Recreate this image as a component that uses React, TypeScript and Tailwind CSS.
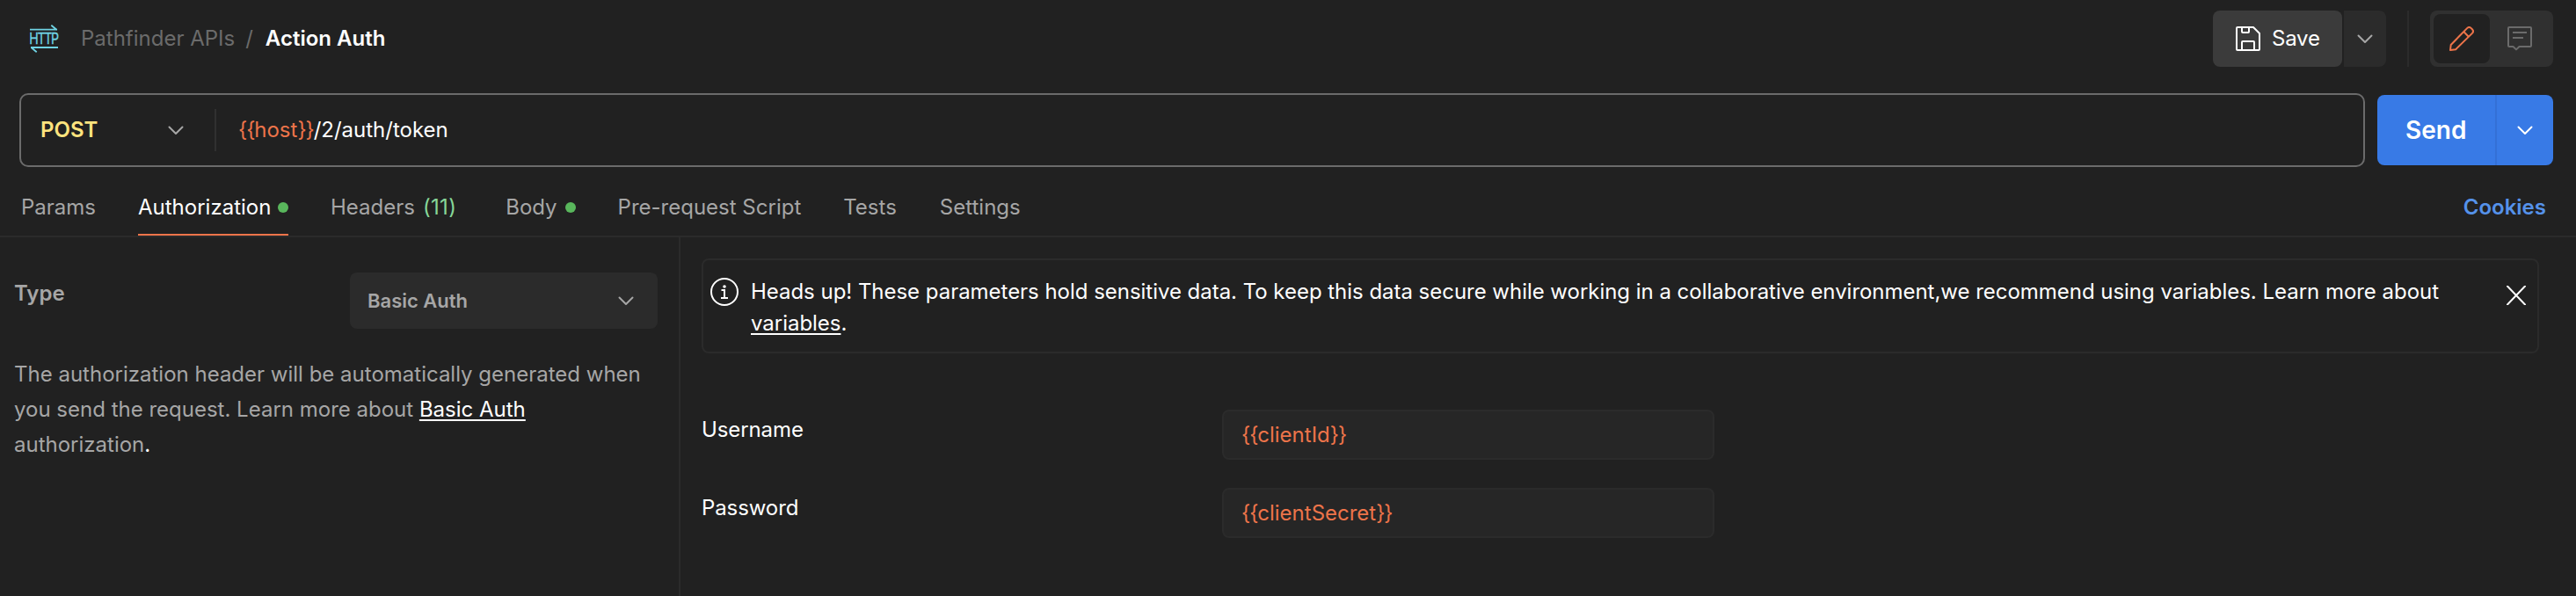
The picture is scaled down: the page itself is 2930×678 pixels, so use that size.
import React from "react";

function Chevron({ className = "" }: { className?: string }) {
  return (
    <svg viewBox="0 0 18 11" className={"h-[11px] w-[18px] shrink-0 " + className} fill="none" stroke="currentColor" strokeWidth="2" strokeLinecap="round" strokeLinejoin="round">
      <path d="M1.5 1.5L9 9l7.500-7.500" />
    </svg>
  );
}

function HttpIcon() {
  return (
    <svg viewBox="0 0 32 32" className="h-8 w-8 overflow-visible text-[#6fd3e3]" fill="none" stroke="currentColor" strokeWidth="1.8">
      <path d="M0 5.6h31M24.3 .8l6.4 5.2M32 26H1M7.7 31.2L1.5 26" />
      <text x="-.8" y="22.4" fontSize="17.5" letterSpacing="-1.6" textLength="32.6" lengthAdjust="spacingAndGlyphs" fill="currentColor" strokeWidth=".3" className="font-['Inter',sans-serif]">
        HTTP
      </text>
    </svg>
  );
}

function SaveIcon() {
  return (
    <svg viewBox="0 0 28 28" className="h-7 w-7" fill="none" stroke="currentColor" strokeWidth="2" strokeLinejoin="round">
      <path d="M1 2a1 1 0 0 1 1-1h18L27 8V26a1 1 0 0 1-1 1H2a1 1 0 0 1-1-1z" />
      <path d="M7 1v5a1 1 0 0 0 1 1h6a1 1 0 0 0 1-1V1M7 27V18a1 1 0 0 1 1-1h12a1 1 0 0 1 1 1v9" />
    </svg>
  );
}

function PencilIcon() {
  return (
    <svg viewBox="0 0 28 28" className="h-7 w-7 text-[#ed744a]" fill="none" stroke="currentColor" strokeWidth="2" strokeLinejoin="round">
      <path d="M1 27l.7-6L20.1 2.100a3.400 3.400 0 0 1 4.700 0l1.100 1.100a3.400 3.400 0 0 1 0 4.700L7.200 26.200z" />
      <path d="M16.300 6l5.500 5.800" />
    </svg>
  );
}

function CommentIcon() {
  return (
    <svg viewBox="0 0 28 28" className="h-7 w-7 text-[#6b6b6b]" fill="none" stroke="currentColor" strokeWidth="2" strokeLinejoin="round">
      <path d="M2 1h24a1 1 0 0 1 1 1v20a1 1 0 0 1-1 1H13.500L10 26.400 6.500 23H2a1 1 0 0 1-1-1V2a1 1 0 0 1 1-1z" />
      <path d="M6 7h16M6 13h12" />
    </svg>
  );
}

function InfoIcon() {
  return (
    <svg viewBox="0 0 32 32" className="h-8 w-8 shrink-0" fill="none" stroke="currentColor" strokeWidth="2">
      <circle cx="16" cy="16" r="15" />
      <path d="M12.5 14H16v9M12 23h8" />
      <circle cx="16" cy="10" r="1.8" fill="currentColor" stroke="none" />
    </svg>
  );
}

function CloseIcon() {
  return (
    <svg viewBox="0 0 22 22" className="h-[22px] w-[22px]" fill="none" stroke="currentColor" strokeWidth="2" strokeLinecap="round">
      <path d="M1 .5l20 21M21 .5l-20 21" />
    </svg>
  );
}

function Dot() {
  return <span className="h-3 w-3 rounded-full bg-[#59b75c]" />;
}

function Variable({ name }: { name: string }) {
  return (
    <span className="text-[#ed744a]">
      <span className="tracking-[-1.1px]">{"{{"}</span>
      {name}
      <span className="tracking-[-1.1px]">{"}}"}</span>
    </span>
  );
}

function Credential({ label, variable }: { label: string; variable: string }) {
  return (
    <div className="flex h-[57px] items-start">
      <label className="w-[592px] leading-[46px] tracking-[-0.1px]">{label}</label>
      <div className="flex h-[57px] w-[560px] items-center rounded-lg border-2 border-[#2b2b2b] bg-[#262626] px-5">
        <Variable name={variable} />
      </div>
    </div>
  );
}

export default function App() {
  return (
    <div className="flex h-[678px] w-[2930px] flex-col overflow-hidden bg-[#212121] font-['Inter',sans-serif] text-[24px] leading-[36px] whitespace-nowrap text-white">
      <header className="mt-3 flex h-16 items-center pr-[26px] pl-[34px]">
        <HttpIcon />
        <span className="ml-[26px] text-[#6b6b6b]">Pathfinder APIs</span>
        <span className="ml-[12px] text-[#6b6b6b]">/</span>
        <span className="ml-[14px] font-semibold">Action Auth</span>
        <div className="ml-auto flex h-16 items-center">
          <button className="flex h-16 w-[147px] items-center rounded-lg bg-[#3b3b3b] pl-[26px]">
            <SaveIcon />
            <span className="ml-[13px] tracking-[-0.2px]">Save</span>
          </button>
          <button className="ml-[2px] flex h-16 w-12 items-center justify-center rounded-r-lg bg-[#2b2b2b] text-[#a6a6a6]">
            <Chevron />
          </button>
          <div className="ml-6 h-16 w-[2px] bg-[#2b2b2b]" />
          <div className="ml-6 flex h-16 w-[140px] items-center rounded-lg bg-[#303030] p-1">
            <div className="flex h-14 w-16 items-center justify-center rounded-lg bg-[#212121]">
              <PencilIcon />
            </div>
            <div className="flex h-14 flex-1 items-center justify-center">
              <CommentIcon />
            </div>
          </div>
        </div>
      </header>

      <div className="mt-[30px] flex items-center pr-[26px] pl-[22px]">
        <div className="flex h-[84px] flex-1 items-center rounded-[10px] border-2 border-[#6b6b6b] pl-[22px]">
          <span className="w-[145px] font-semibold text-[#ffe47e]">POST</span>
          <Chevron className="text-[#a6a6a6]" />
          <div className="ml-[35px] h-12 w-[2px] bg-[#303030]" />
          <span className="ml-[25px]">
            <Variable name="host" />
            /2/auth/token
          </span>
        </div>
        <div className="ml-[14px] flex h-20 w-[200px] items-center rounded-lg bg-[#387ae6]">
          <span className="w-[134px] pl-[32px] text-[28px] font-semibold">Send</span>
          <div className="h-20 w-[2px] bg-[#3470d6]" />
          <div className="flex h-20 flex-1 items-center justify-center">
            <Chevron />
          </div>
        </div>
      </div>

      <nav className="mt-[14px] flex h-[66px] shrink-0 items-stretch border-b-2 border-[#2b2b2b] pr-[34px] pl-6 text-[#a6a6a6]">
        <div className="flex items-center">Params</div>
        <div className="ml-12 flex w-[171px] items-center justify-between border-b-2 border-[#ed744a] pt-[2px] text-white">
          Authorization
          <Dot />
        </div>
        <div className="ml-12 flex items-center gap-[9px]">
          <span>Headers</span>
          <span className="tracking-[0.3px] text-[#87d799]">(11)</span>
        </div>
        <div className="ml-[56px] flex items-center gap-[9px]">
          Body
          <Dot />
        </div>
        <div className="ml-12 flex items-center">Pre-request Script</div>
        <div className="ml-12 flex items-center">Tests</div>
        <div className="ml-[49px] flex items-center">Settings</div>
        <div className="ml-auto flex items-center font-semibold text-[#5592ea]">Cookies</div>
      </nav>

      <main className="flex flex-1">
        <aside className="w-[774px] border-r-2 border-[#2b2b2b] pt-10 pl-4 text-[#a6a6a6]">
          <div className="flex h-16 items-start">
            <span className="w-[382px] leading-[48px] font-semibold">Type</span>
            <div className="flex h-16 w-[350px] items-center justify-between rounded-lg bg-[#2b2b2b] pr-[27px] pl-5 text-[22px] font-semibold">
              Basic Auth
              <Chevron />
            </div>
          </div>
          <p className="mt-8 w-[730px] leading-10 whitespace-normal">
            The authorization header will be automatically generated when you send the request. Learn more about{" "}
            <a className="text-white underline decoration-2 underline-offset-[3px]">Basic Auth</a> authorization<span className="text-white">.</span>
          </p>
        </aside>

        <section className="flex-1 pt-6 pl-6">
          <div className="flex h-[108px] w-[2090px] items-start rounded-lg border-2 border-[#2b2b2b] pt-[18px] pl-2">
            <div className="pt-[2px]">
              <InfoIcon />
            </div>
            <p className="ml-[14px] w-[1960px] tracking-[-0.03px] whitespace-normal">
              Heads up! These parameters hold sensitive data. To keep this data secure while working in a collaborative environment,we recommend using variables. Learn more about{" "}
              <a className="underline decoration-2 underline-offset-[3px]">variables</a>.
            </p>
            <button className="mt-[11px] ml-[37px]">
              <CloseIcon />
            </button>
          </div>
          <div className="mt-16 flex flex-col gap-8">
            <Credential label="Username" variable="clientId" />
            <Credential label="Password" variable="clientSecret" />
          </div>
        </section>
      </main>
    </div>
  );
}
